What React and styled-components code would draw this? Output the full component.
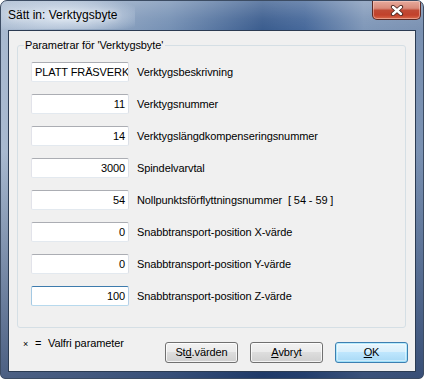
import React from 'react';
import styled, { createGlobalStyle } from 'styled-components';

const Global = createGlobalStyle`
  html, body { margin: 0; padding: 0; background: #ffffff; overflow: hidden; }
  body { font-family: "Liberation Sans", Arial, sans-serif; }
  #root { width: 424px; height: 379px; }
`;

const Window = styled.div`
  width: 424px;
  height: 379px;
  box-sizing: border-box;
  display: flex;
  flex-direction: column;
  border: 1px solid #3c4c63;
  border-radius: 7px 7px 5px 5px;
  overflow: hidden;
  background:
    linear-gradient(to bottom, rgba(255,255,255,0.22) 0px, rgba(255,255,255,0.06) 18px, rgba(255,255,255,0) 30px, rgba(10,30,70,0) 40%, rgba(12,34,78,0.6) 100%),
    linear-gradient(to right, #a9bad0 0%, #98acc6 18%, #7590b4 40%, #3a5c8e 62%, #46689a 72%, #7f97b8 86%, #7a91b2 100%);
`;

const TitleBar = styled.div`
  height: 29px;
  flex: none;
  display: flex;
  align-items: flex-start;
  padding-left: 7px;
`;

const Title = styled.div`
  font-size: 12px;
  line-height: 15px;
  padding-top: 7px;
  color: #000;
  background: radial-gradient(ellipse 60% 70% at 50% 55%, rgba(235,242,250,0.85) 0%, rgba(220,230,242,0.5) 55%, rgba(220,230,242,0) 100%);
  margin-left: -14px;
  padding-left: 14px;
  padding-right: 18px;
  padding-bottom: 6px;
  text-shadow: 0 0 6px rgba(255,255,255,0.9);
`;

const CloseButton = styled.div`
  margin-left: auto;
  margin-right: 2px;
  width: 49px;
  height: 19px;
  box-sizing: border-box;
  border: 1px solid #5c2a24;
  border-top: none;
  border-radius: 0 0 5px 5px;
  background: linear-gradient(to bottom, #e6aa9c 0%, #d98b7b 40%, #c04a35 52%, #c2412b 78%, #d9694b 100%);
  box-shadow: inset 0 0 0 1px rgba(255,220,210,0.45);
  display: flex;
  align-items: center;
  justify-content: center;
`;

const Client = styled.div`
  flex: 1;
  margin: 0 7px 6px 7px;
  border: 1px solid #2b3b52;
  background: #f0f0f0;
  padding: 14px 7px 0 8px;
  display: flex;
  flex-direction: column;
  font-size: 11px;
  letter-spacing: -0.1px;
  color: #000;
`;

const GroupBox = styled.div`
  border: 1px solid #d5dfe5;
  border-radius: 3px;
  margin-right: 2px;
  padding: 0 0 21px 0;
  display: flex;
  flex-direction: column;
`;

const Legend = styled.div`
  margin-top: -7px;
  margin-left: 6px;
  padding: 0 2px 0 1px;
  width: fit-content;
  background: #f0f0f0;
  line-height: 13px;
  font-size: 11px;
`;

const Rows = styled.div`
  margin-top: 10px;
  padding-left: 13px;
  display: flex;
  flex-direction: column;
  gap: 12px;
`;

const Row = styled.div`
  display: flex;
  align-items: center;
  height: 20px;
`;

const Field = styled.div`
  width: 98px;
  height: 20px;
  box-sizing: border-box;
  border: 1px solid;
  border-color: ${p => p.$focused ? '#3d7bad #b5cfe7 #b7d9ed #a4c9e3' : '#abadb3 #dbdfe6 #e3e9ef #e2e3ea'};
  border-radius: 2px;
  background: #fff;
  line-height: 18px;
  font-size: 11px;
  white-space: nowrap;
  overflow: hidden;
  text-align: ${p => p.$left ? 'left' : 'right'};
  padding: ${p => p.$left ? '0 0 0 3px' : '0 3px 0 0'};
`;

const Label = styled.div`
  margin-left: 8px;
  line-height: 13px;
  white-space: pre;
`;

const Footer = styled.div`
  display: flex;
  align-items: flex-start;
  margin-top: 9px;
`;

const Note = styled.div`
  padding-left: 6px;
  line-height: 13px;
  display: flex;
  align-items: baseline;
`;

const Cross = styled.span`
  font-size: 9px;
  width: 12px;
`;

const Eq = styled.span`
  width: 13px;
`;

const Buttons = styled.div`
  margin-left: auto;
  margin-top: 5px;
  display: flex;
  gap: 12px;
`;

const Button = styled.div`
  width: 73px;
  height: 21px;
  box-sizing: border-box;
  border: 1px solid ${p => p.$default ? '#3c7fb1' : '#707070'};
  border-radius: 3px;
  background: ${p => p.$default
    ? 'linear-gradient(to bottom, #e8f6fd 0%, #d9f0fc 45%, #bee6fd 50%, #a7d9f5 100%)'
    : 'linear-gradient(to bottom, #f2f2f2 0%, #ebebeb 45%, #dddddd 50%, #cfcfcf 100%)'};
  box-shadow: ${p => p.$default
    ? 'inset 0 0 0 1px #48d2fd55, inset 0 0 0 2px #ffffff66'
    : 'inset 0 0 0 1px rgba(255,255,255,0.75)'};
  display: flex;
  align-items: center;
  justify-content: center;
  font-size: 11px;
  line-height: 13px;
  padding-bottom: 1px;
`;

const Key = styled.span`
  text-decoration: underline;
  text-underline-offset: 1px;
`;

const rows = [
  { value: 'PLATT FRÄSVERK', label: 'Verktygsbeskrivning', left: true },
  { value: '11', label: 'Verktygsnummer' },
  { value: '14', label: 'Verktygslängdkompenseringsnummer' },
  { value: '3000', label: 'Spindelvarvtal' },
  { value: '54', label: 'Nollpunktsförflyttningsnummer  [ 54 - 59 ]' },
  { value: '0', label: 'Snabbtransport-position X-värde' },
  { value: '0', label: 'Snabbtransport-position Y-värde' },
  { value: '100', label: 'Snabbtransport-position Z-värde', focused: true },
];

export default function App() {
  return (
    <>
      <Global />
      <Window>
        <TitleBar>
          <Title>Sätt in: Verktygsbyte</Title>
          <CloseButton>
            <svg width="14" height="11" viewBox="0 0 14 11">
              <path d="M3 2 L11 9 M11 2 L3 9" stroke="#4a2620" strokeWidth="4.2" strokeLinecap="round" />
              <path d="M3 2 L11 9 M11 2 L3 9" stroke="#ffffff" strokeWidth="2.4" strokeLinecap="round" />
            </svg>
          </CloseButton>
        </TitleBar>
        <Client>
          <GroupBox>
            <Legend>Parametrar för 'Verktygsbyte'</Legend>
            <Rows>
              {rows.map((r, i) => (
                <Row key={i}>
                  <Field $left={r.left} $focused={r.focused}>{r.value}</Field>
                  <Label>{r.label}</Label>
                </Row>
              ))}
            </Rows>
          </GroupBox>
          <Footer>
            <Note>
              <Cross>×</Cross>
              <Eq>=</Eq>
              <span>Valfri parameter</span>
            </Note>
            <Buttons>
              <Button>St<Key>d</Key>.värden</Button>
              <Button><Key>A</Key>vbryt</Button>
              <Button $default><Key>O</Key>K</Button>
            </Buttons>
          </Footer>
        </Client>
      </Window>
    </>
  );
}
